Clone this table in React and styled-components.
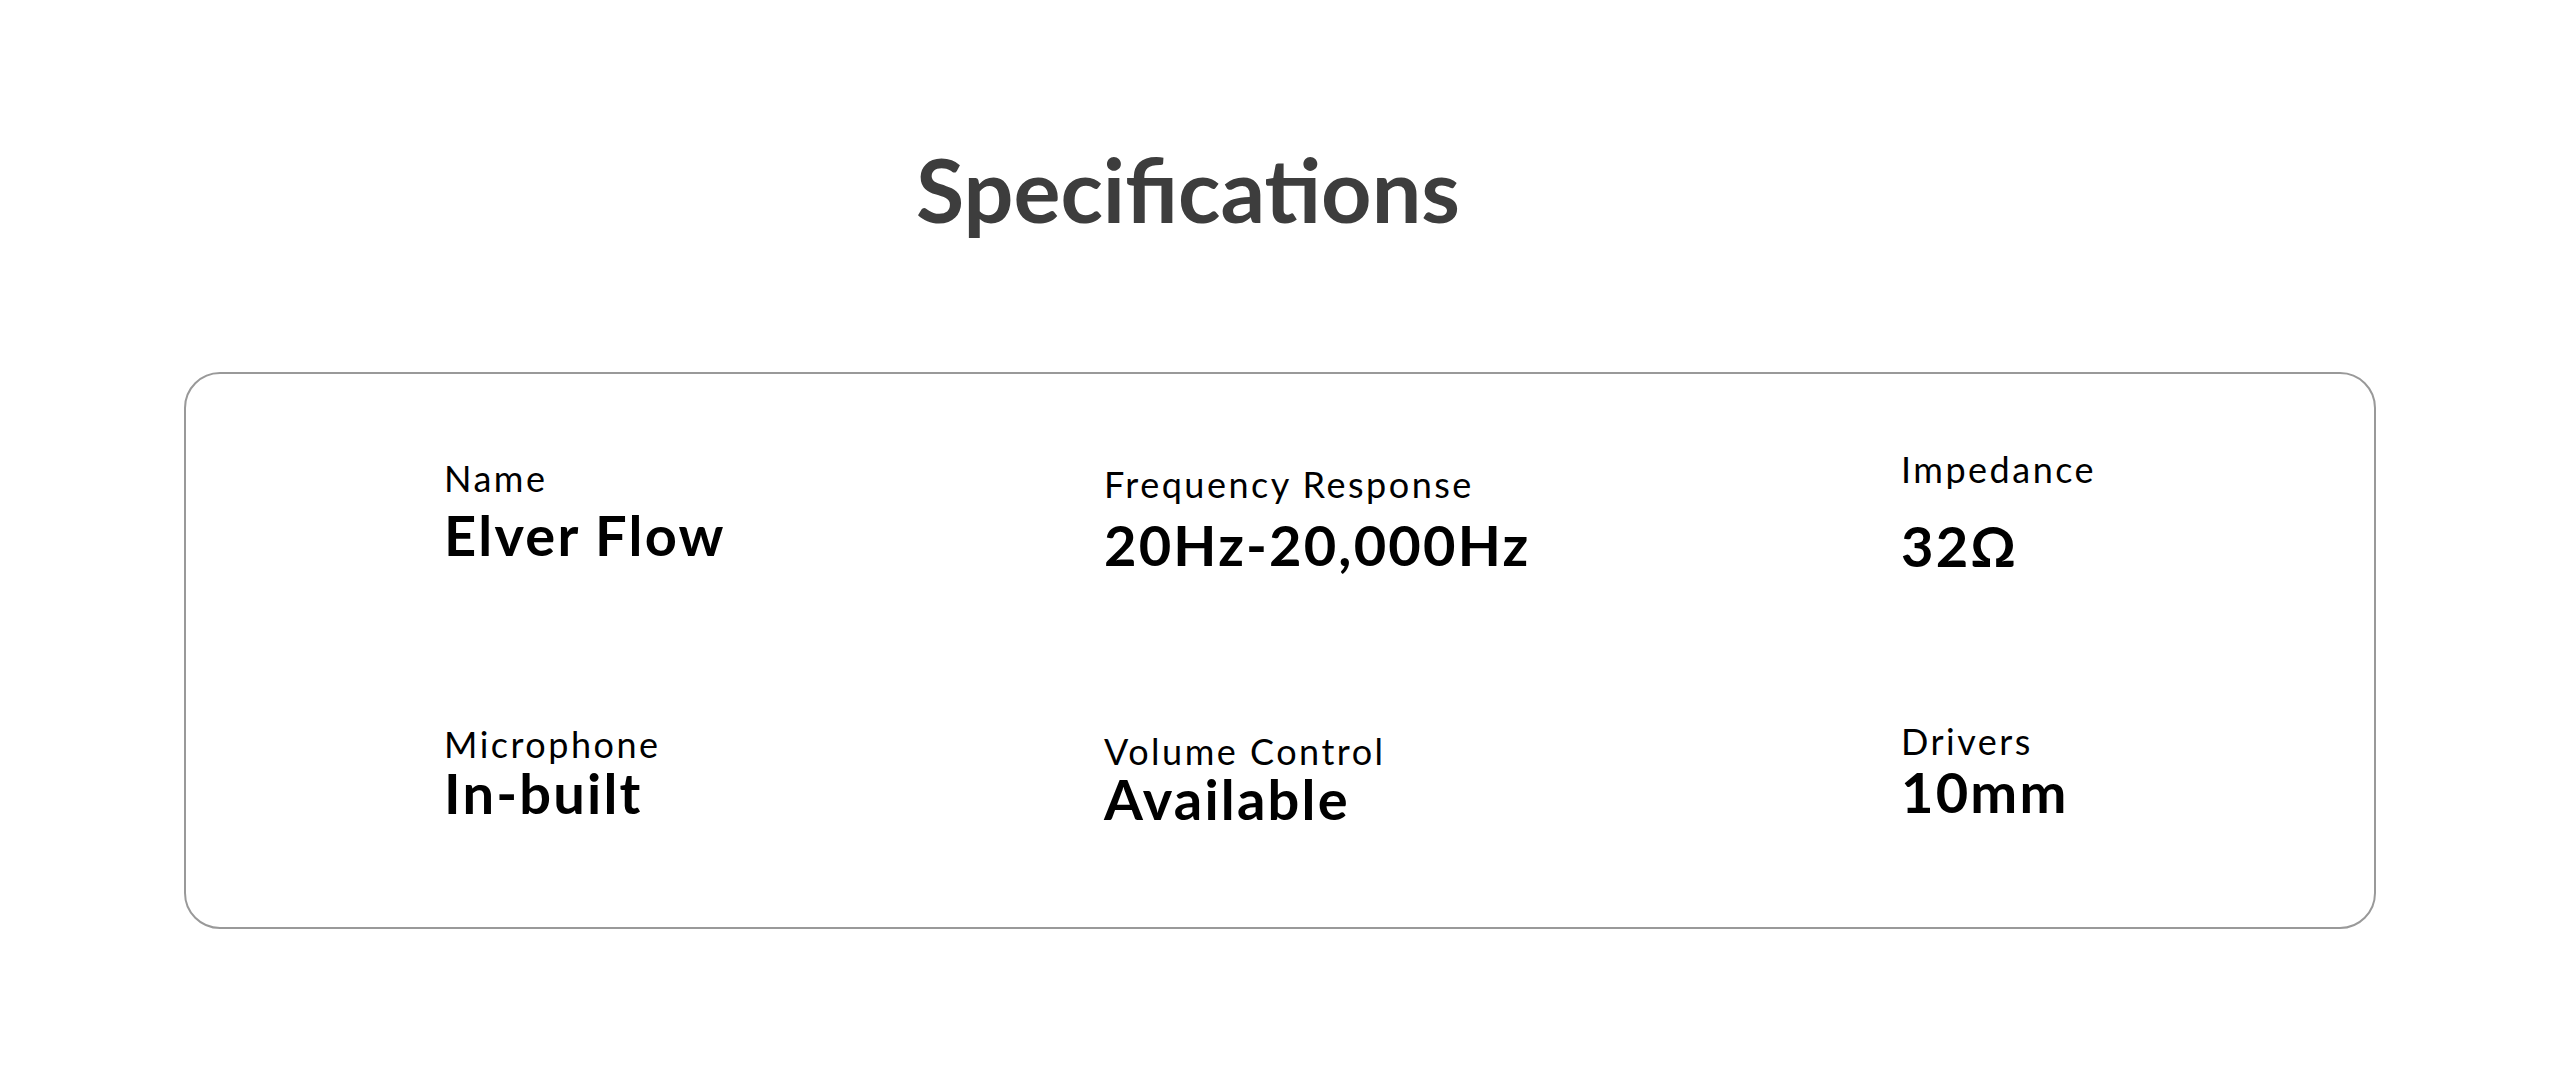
import React from "react";
import styled, { createGlobalStyle } from "styled-components";

const specs = [
  { label: "Name", value: "Elver Flow", top: 86, gap: 11 },
  { label: "Frequency Response", value: "20Hz-20,000Hz", top: 92, gap: 15 },
  { label: "Impedance", value: "32Ω", top: 77, gap: 31 },
  { label: "Microphone", value: "In-built", top: 86, gap: 3 },
  { label: "Volume Control", value: "Available", top: 93, gap: 2 },
  { label: "Drivers", value: "10mm", top: 83, gap: 5 },
];

export default function App() {
  return (
    <>
      <GlobalStyle />
      <Page>
        <Title>Specifications</Title>
        <Card>
          {specs.map((s) => (
            <Spec key={s.label} $top={s.top} $gap={s.gap}>
              <Label>{s.label}</Label>
              <Value>{s.value}</Value>
            </Spec>
          ))}
        </Card>
      </Page>
    </>
  );
}

const GlobalStyle = createGlobalStyle`
  body {
    margin: 0;
    background: #fff;
    font-family: Lato, "Open Sans", sans-serif;
  }
`;

const Page = styled.div`
  width: 2560px;
  height: 1080px;
  padding: 145px 0 0 0;
  box-sizing: border-box;
`;

const Title = styled.h2`
  margin: 0 0 139px 916px;
  font-size: 88px;
  line-height: 1;
  font-weight: 700;
  color: #3d3d3d;
`;

const Card = styled.div`
  margin: 0 184px;
  height: 557px;
  box-sizing: border-box;
  border: 2px solid #999;
  border-radius: 36px;
  padding-left: 258px;
  display: grid;
  grid-template-columns: 660px 797px 1fr;
  grid-template-rows: 266px 1fr;
`;

const Spec = styled.div`
  display: flex;
  flex-direction: column;
  align-items: flex-start;
  padding-top: ${(p) => p.$top}px;
  gap: ${(p) => p.$gap}px;
`;

const Label = styled.span`
  font-size: 36px;
  line-height: 1;
  font-weight: 400;
  letter-spacing: 2.5px;
  color: #000;
`;

const Value = styled.span`
  font-size: 56px;
  line-height: 1;
  font-weight: 700;
  letter-spacing: 2.2px;
  color: #000;
`;
